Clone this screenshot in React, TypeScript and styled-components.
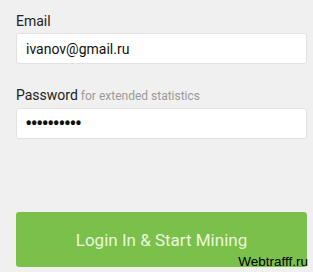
import styled, { createGlobalStyle } from 'styled-components';

const GlobalStyle = createGlobalStyle`
  html, body {
    margin: 0;
    padding: 0;
    background: #f0f0f0;
  }
  body {
    font-family: Roboto, "Liberation Sans", Arial, sans-serif;
  }
`

const Page = styled.div`
  position: relative;
  width: 313px;
  height: 272px;
  box-sizing: border-box;
  padding: 12px 6px 0 16px;
  background: #f0f0f0;
  overflow: hidden;
`

const Field = styled.div<{ $gap: number }>`
  display: flex;
  flex-direction: column;
  margin-bottom: ${p => p.$gap}px;
`

const Label = styled.label`
  font-size: 14px;
  line-height: 18px;
  color: #222;
  margin-bottom: 3px;
`

const Hint = styled.span`
  font-size: 12px;
  color: #9a9a9a;
  margin-left: 3px;
`

const Input = styled.input<{ $mask?: boolean }>`
  box-sizing: border-box;
  width: 100%;
  height: 31px;
  padding: 0 ${p => (p.$mask ? 8 : 9)}px;
  border: 1px solid #e2e2e2;
  border-radius: 3px;
  background: #fff;
  font-family: Roboto, "Liberation Sans", Arial, sans-serif;
  font-size: ${p => (p.$mask ? 22 : 14)}px;
  letter-spacing: ${p => (p.$mask ? '-1.9px' : 'normal')};
  color: #111;
  outline: none;
`

const Button = styled.button`
  display: block;
  width: 100%;
  height: 55px;
  border: none;
  border-radius: 3px;
  background: #7bc04b;
  color: #e9f7dc;
  font-family: Roboto, "Liberation Sans", Arial, sans-serif;
  font-size: 17px;
  cursor: pointer;
`

const Watermark = styled.div`
  position: absolute;
  right: 5px;
  bottom: 3px;
  font-family: "Liberation Sans", Arial, sans-serif;
  font-size: 13.5px;
  color: #000;
`

export default function App() {
  return (
    <>
      <GlobalStyle />
      <Page>
        <Field $gap={22}>
          <Label>Email</Label>
          <Input type="text" defaultValue="ivanov@gmail.ru" readOnly />
        </Field>
        <Field $gap={73}>
          <Label>
            Password<Hint>for extended statistics</Hint>
          </Label>
          <Input $mask type="password" defaultValue="1234567890" readOnly />
        </Field>
        <Button>Login In &amp; Start Mining</Button>
        <Watermark>Webtrafff.ru</Watermark>
      </Page>
    </>
  )
}
